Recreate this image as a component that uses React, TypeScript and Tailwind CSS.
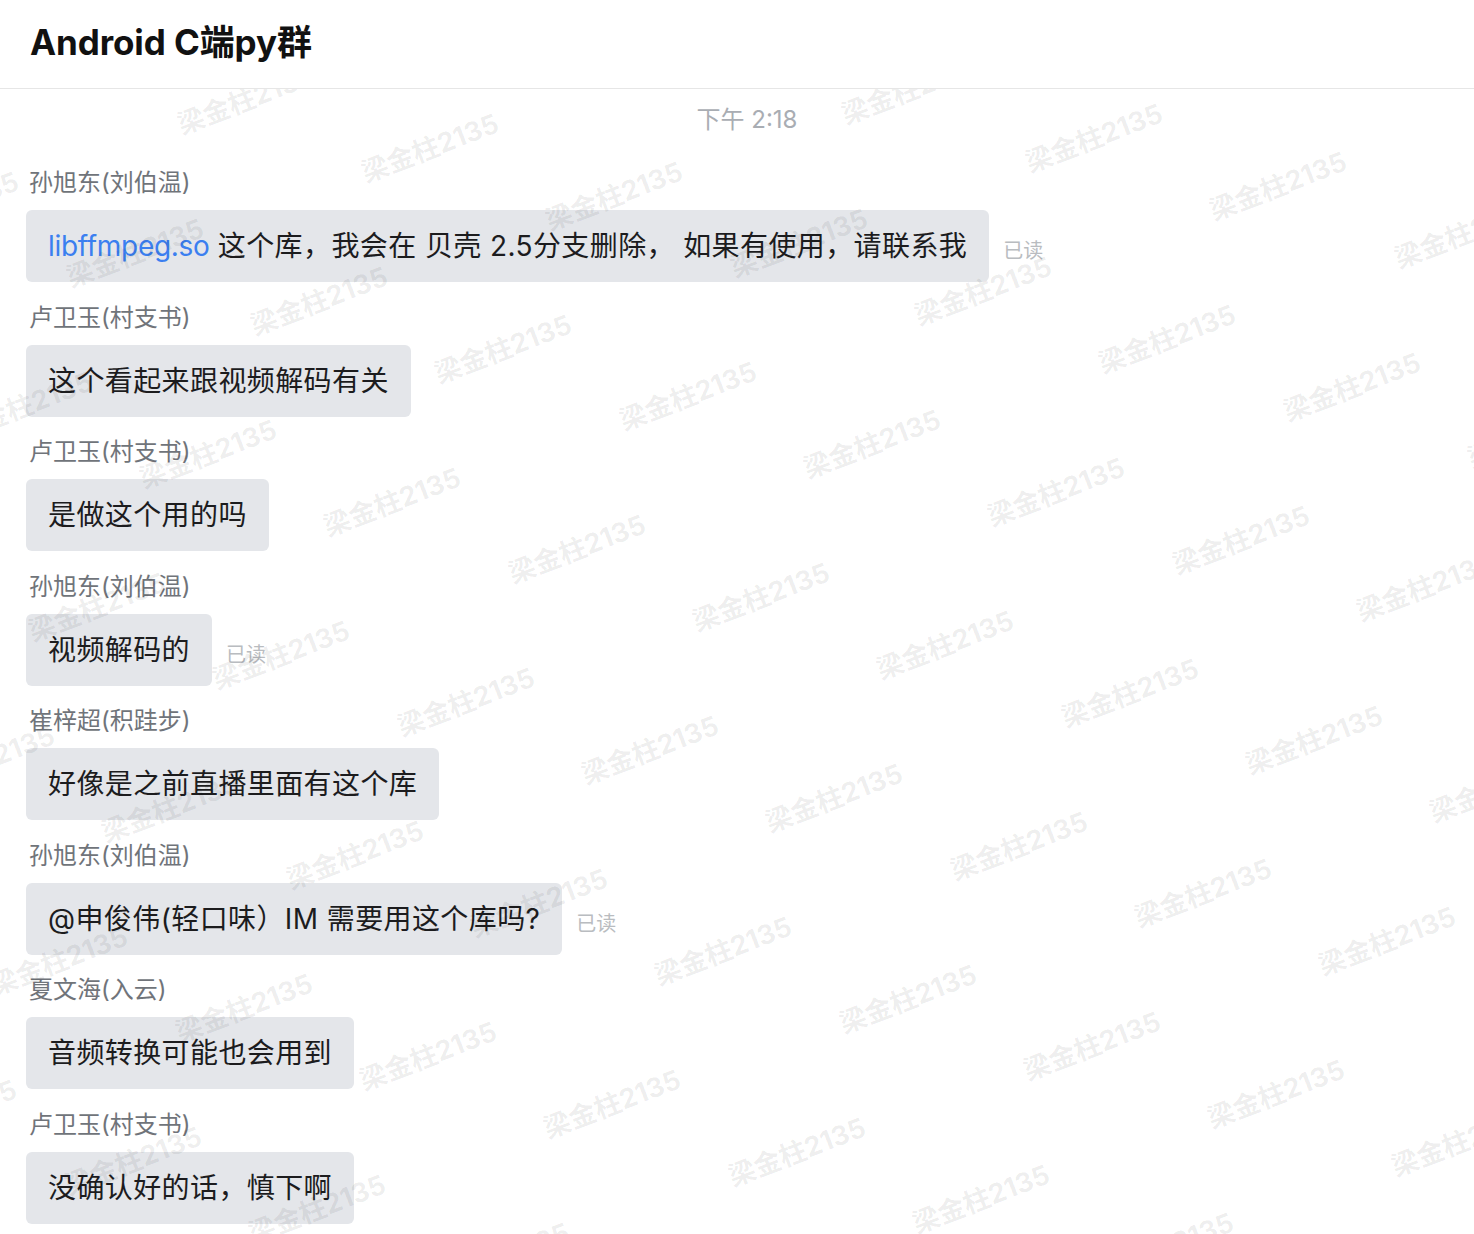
import React from 'react';

type Msg = {
  name: string;
  text: React.ReactNode;
  read?: boolean;
};

const MESSAGES: Msg[] = [
  {
    name: '孙旭东(刘伯温)',
    text: (
      <>
        <span className="tracking-[-0.3px] text-[#3b7ff0]">libffmpeg.so</span> 这个库，我会在 贝壳 2.5分支删除， 如果有使用，请联系我
      </>
    ),
    read: true,
  },
  { name: '卢卫玉(村支书)', text: '这个看起来跟视频解码有关' },
  { name: '卢卫玉(村支书)', text: '是做这个用的吗' },
  { name: '孙旭东(刘伯温)', text: '视频解码的', read: true },
  { name: '崔梓超(积跬步)', text: '好像是之前直播里面有这个库' },
  { name: '孙旭东(刘伯温)', text: '@申俊伟(轻口味）IM 需要用这个库吗?', read: true },
  { name: '夏文海(入云)', text: '音频转换可能也会用到' },
  { name: '卢卫玉(村支书)', text: '没确认好的话，慎下啊' },
];

// watermark grid, measured from the header line down
const HEADER = 89;

function Watermark() {
  const marks: { x: number; y: number }[] = [];
  for (let i = -6; i <= 12; i++) {
    for (let j = -3; j <= 10; j++) {
      const x = 430 + i * 184.3 - j * 111;
      const y = 148 - HEADER + i * 47.7 + j * 153;
      if (x > -120 && x < 1600 && y > -80 && y < 1250) marks.push({ x, y });
    }
  }
  return (
    <div className="pointer-events-none absolute inset-x-0 top-[89px] bottom-0 overflow-hidden">
      {marks.map((m, k) => (
        <span
          key={k}
          className="absolute whitespace-nowrap text-[27px] font-bold leading-none text-black/[0.07] -translate-x-1/2 -translate-y-1/2 -rotate-[21deg]"
          style={{ left: m.x, top: m.y }}
        >
          梁金柱2135
        </span>
      ))}
    </div>
  );
}

export default function App() {
  return (
    <div className="relative min-h-screen overflow-hidden bg-white font-['Inter','Noto_Sans_CJK_SC',sans-serif] text-[#1c1c1e]">
      <div className="flex h-[89px] items-center border-b border-[#e6e6e6] px-[30px] pb-[4px]">
        <h1 className="text-[35px] font-bold tracking-[-0.1px] text-[#111]">Android C端py群</h1>
      </div>

      <div className="mt-[17px] pl-[20px] text-center text-[24px] leading-[28px] text-[#a9adb3]">下午 2:18</div>

      <div className="mt-[35px] flex flex-col gap-[21.5px] px-[26px]">
        {MESSAGES.map((m, i) => (
          <div key={i} className="flex flex-col">
            <div className="pl-[3px] text-[24px] leading-[28px] text-[#70747a]">{m.name}</div>
            <div className="mt-[13px] flex items-center">
              <div className="whitespace-nowrap rounded-[6px] bg-[#e4e6ea] px-[22px] py-[16px] text-[28px] leading-[40px] tracking-[0.4px]">
                {m.text}
              </div>
              {m.read && (
                <span className="ml-[14px] mt-[10px] text-[20px] text-[#b9bcc0]">已读</span>
              )}
            </div>
          </div>
        ))}
      </div>

      <Watermark />
    </div>
  );
}
